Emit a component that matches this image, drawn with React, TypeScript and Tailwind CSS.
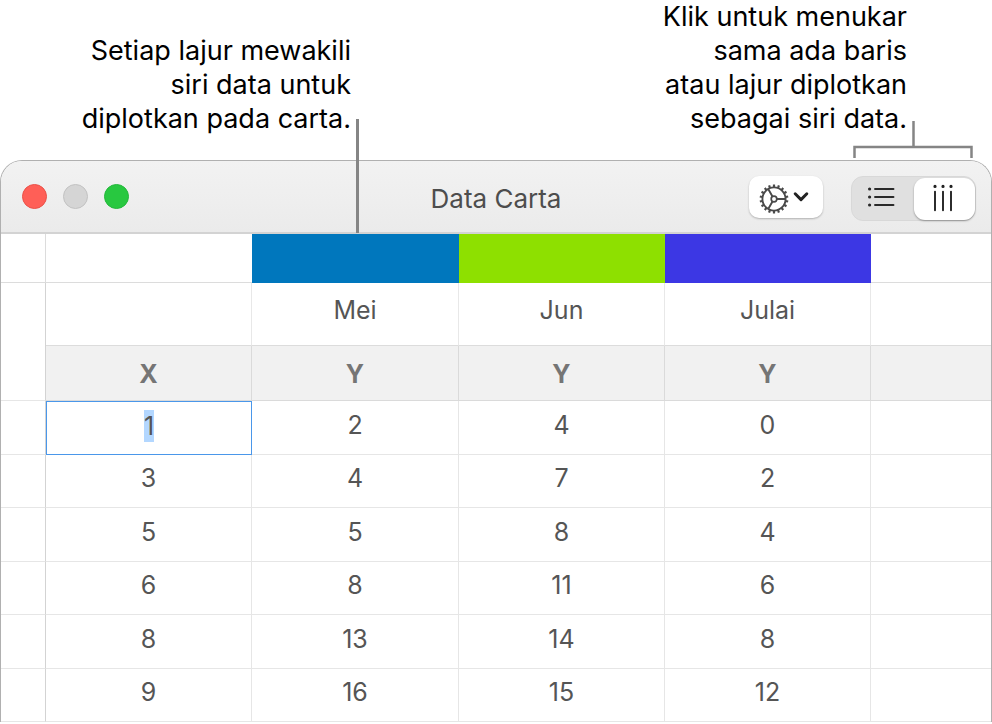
import { useEffect, useRef } from "react"

type Series = {
  name: string
  swatch: string
}

const series: Series[] = [
  { name: "Mei", swatch: "border-[#0077bd] bg-[#0077bd]" },
  { name: "Jun", swatch: "border-[#8ee000] bg-[#8ee000]" },
  { name: "Julai", swatch: "border-[#3c37e4] bg-[#3c37e4]" },
]

const rows = [
  [1, 2, 4, 0],
  [3, 4, 7, 2],
  [5, 5, 8, 4],
  [6, 8, 11, 6],
  [8, 13, 14, 8],
  [9, 16, 15, 12],
]

function GearIcon() {
  const teeth = Array.from({ length: 18 }, (_, i) => i * 20)

  return (
    <svg viewBox="0 0 30 30" className="size-[30px]" fill="none" stroke="#4a4a4a" aria-hidden="true">
      <circle cx="15" cy="15" r="11.6" strokeWidth="1.9" />
      <circle cx="15" cy="15" r="2.8" strokeWidth="1.7" />
      {teeth.map((angle) => (
        <path key={angle} d="M15 3.4V0.6" strokeWidth="2.2" transform={`rotate(${angle} 15 15)`} />
      ))}
      <path d="M18 15h8.6M13.5 12.4 9.2 5M13.5 17.6 9.2 25" strokeWidth="1.9" />
    </svg>
  )
}

function ChevronIcon() {
  return (
    <svg viewBox="0 0 16 12" className="h-3 w-4" fill="none" stroke="#222" aria-hidden="true">
      <path d="M2.2 2.8 8 8.6l5.8-5.8" strokeWidth="3" strokeLinecap="round" strokeLinejoin="round" />
    </svg>
  )
}

function RowsIcon() {
  return (
    <svg viewBox="0 0 28 22" className="h-[22px] w-7" fill="none" stroke="#2a2a2a" aria-hidden="true">
      <path d="M8 3h18.5M8 11h18.5M8 19h18.5" strokeWidth="1.9" strokeLinecap="round" />
      <path d="M2.6 3h.01M2.6 11h.01M2.6 19h.01" strokeWidth="3.2" strokeLinecap="round" />
    </svg>
  )
}

function ColumnsIcon() {
  return (
    <svg viewBox="0 0 22 28" className="h-7 w-[22px]" fill="none" stroke="#222" aria-hidden="true">
      <path d="M3 7.6v18.6M11 7.6v18.6M19 7.6v18.6" strokeWidth="1.9" strokeLinecap="round" />
      <path d="M3 2.4h.01M11 2.4h.01M19 2.4h.01" strokeWidth="3.2" strokeLinecap="round" />
    </svg>
  )
}

function Callouts() {
  return (
    <div className="flex h-40 items-end justify-between pb-6 pl-[79px] pr-[85px] text-right text-[27px] leading-[34px] text-black">
      <p className="w-[272px]">
        Setiap lajur mewakili
        <br />
        siri data untuk
        <br />
        diplotkan pada carta.
      </p>
      <p>
        Klik untuk menukar
        <br />
        sama ada baris
        <br />
        atau lajur diplotkan
        <br />
        sebagai siri data.
      </p>
    </div>
  )
}

function TitleBar() {
  return (
    <header className="grid h-[73px] grid-cols-[1fr_auto_1fr] items-center border-b-2 border-[#d3d3d3] bg-linear-to-b from-[#f2f2f2] to-[#ebebeb] px-[15px]">
      <div className="flex gap-4 pl-1.5">
        <button aria-label="Tutup" className="size-[25px] rounded-full border border-[#ea5148] bg-[#ff5f57]" />
        <button aria-label="Minimumkan" className="size-[25px] rounded-full border border-[#c2c2c2] bg-[#d5d5d5]" />
        <button aria-label="Zum" className="size-[25px] rounded-full border border-[#23b83b] bg-[#28c840]" />
      </div>

      <h1 className="pt-1 text-[26px] leading-8 text-[#4d4d4d]">Data Carta</h1>

      <div className="flex items-start justify-end gap-7 pt-1">
        <button
          aria-label="Pilihan"
          className="flex h-[42px] w-[74px] items-center gap-1 rounded-[10px] bg-white pl-2.5 shadow-[0_1px_2px_rgba(0,0,0,0.25)]"
        >
          <span className="pt-1">
            <GearIcon />
          </span>
          <ChevronIcon />
        </button>

        <div className="flex h-[45px] w-[125px] items-center rounded-xl border border-[#d8d8d8] bg-[#e0e0e0]">
          <button
            aria-label="Plot baris"
            aria-pressed="false"
            className="flex h-full flex-1 items-center justify-center pr-1 pb-1"
          >
            <RowsIcon />
          </button>
          <button
            aria-label="Plot lajur"
            aria-pressed="true"
            className="flex h-[42px] w-[61px] items-center justify-center rounded-[11px] bg-white pr-1 pb-0.5 shadow-[0_1px_2px_rgba(0,0,0,0.35)]"
          >
            <ColumnsIcon />
          </button>
        </div>
      </div>
    </header>
  )
}

function DataTable() {
  const inputRef = useRef<HTMLInputElement>(null)

  useEffect(() => {
    inputRef.current?.focus()
    inputRef.current?.select()
  }, [])

  return (
    <table className="w-full table-fixed border-separate border-spacing-0 text-center text-[25px] leading-8 text-[#555]">
      <colgroup>
        <col className="w-[45px]" />
        <col className="w-[206px]" />
        <col className="w-[207px]" />
        <col className="w-[206px]" />
        <col className="w-[206px]" />
        <col />
      </colgroup>
      <thead>
        <tr className="h-[49px]">
          <td className="border-r border-b border-[#dcdcdc]" />
          <td className="border-b border-[#dcdcdc]" />
          {series.map((s) => (
            <td key={s.name} className={`border-r border-b ${s.swatch}`} />
          ))}
          <td className="border-b border-[#dcdcdc]" />
        </tr>
        <tr className="h-[63px]">
          <td rowSpan={2} className="border-r border-b border-r-[#d3d3d3] border-b-[#e6e6e6]" />
          <td className="border-r border-b border-r-[#e8e8e8] border-b-[#dcdcdc]" />
          {series.map((s) => (
            <th
              key={s.name}
              scope="col"
              className="border-r border-b border-r-[#e8e8e8] border-b-[#dcdcdc] pb-2 font-normal"
            >
              {s.name}
            </th>
          ))}
          <td className="border-b border-[#dcdcdc]" />
        </tr>
        <tr className="h-[55px] bg-[#f1f1f1] text-[#757575]">
          <th scope="col" className="border-r border-b border-[#dadada] pt-0.5 font-bold">
            X
          </th>
          {series.map((s) => (
            <th key={s.name} scope="col" className="border-r border-b border-[#dadada] pt-0.5 font-bold">
              Y
            </th>
          ))}
          <td className="border-b border-[#dadada]" />
        </tr>
      </thead>
      <tbody>
        {rows.map((row, rowIndex) => (
          <tr key={row[0]} className="h-[54px] even:h-[53px]">
            <td className="border-r border-b border-r-[#d3d3d3] border-b-[#e6e6e6]" />
            {row.map((value, colIndex) =>
              rowIndex === 0 && colIndex === 0 ? (
                <td key={colIndex} className="border border-[#4a97ea] p-0 pb-1">
                  <input
                    ref={inputRef}
                    aria-label="X 1"
                    defaultValue={value}
                    className="block h-8 w-full text-center caret-transparent outline-none selection:bg-[#b3d7ff] selection:text-[#555]"
                  />
                </td>
              ) : (
                <td key={colIndex} className="border-r border-b border-[#e6e6e6] p-0 pb-1.5">
                  {value}
                </td>
              ),
            )}
            <td className="border-b border-[#e6e6e6]" />
          </tr>
        ))}
      </tbody>
    </table>
  )
}

export default function App() {
  return (
    <main className="relative bg-white font-['Inter','Liberation_Sans',sans-serif]">
      <Callouts />

      <section className="overflow-hidden rounded-t-[22px] border border-b-0 border-[#b0b0b0]">
        <TitleBar />
        <DataTable />
      </section>

      {/* leader lines from the callouts to the window */}
      <div className="absolute top-[119px] left-[356px] h-[114px] w-[3px] bg-[#858585]" />
      <svg
        viewBox="0 0 120 38"
        className="absolute top-[121px] right-[19px] h-[38px] w-[120px]"
        fill="none"
        stroke="#858585"
        strokeWidth="2.5"
        aria-hidden="true"
      >
        <path d="M60.5 0v26M1.5 37V26h117v11" />
      </svg>
    </main>
  )
}
